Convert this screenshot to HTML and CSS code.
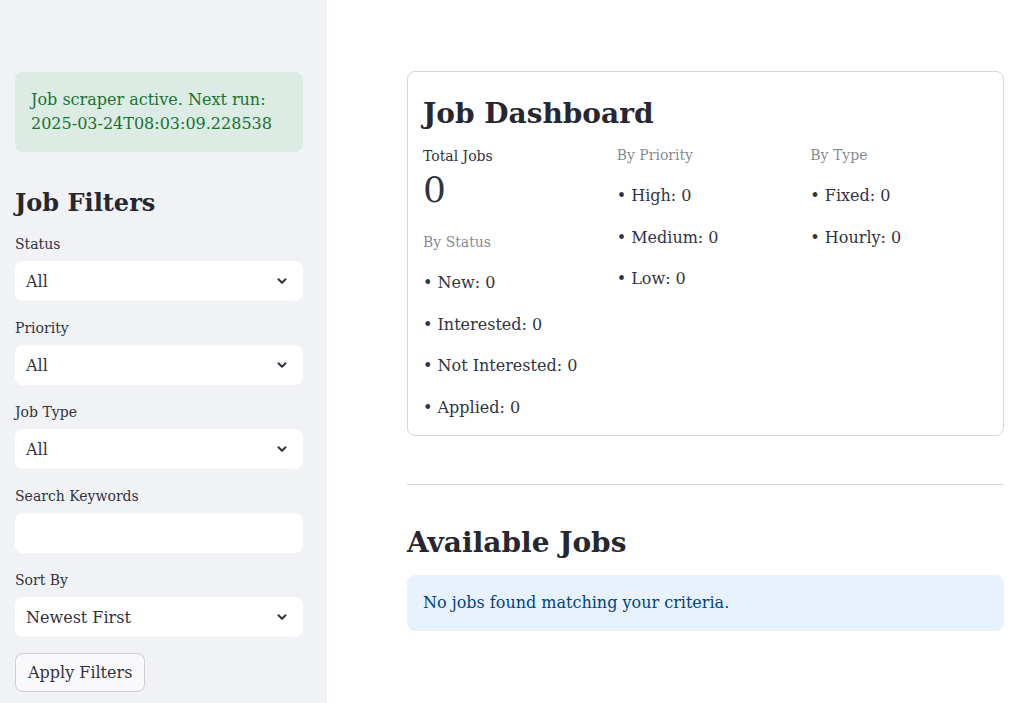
FILE: index.html
```html
<!DOCTYPE html>
<html lang="en">
<head>
<meta charset="utf-8">
<title>Job Dashboard</title>
<link rel="stylesheet" href="styles.css">
</head>
<body>
<div class="app">
  <aside class="sidebar">
    <div class="alert-success">Job scraper active. Next run: 2025-03-24T08:03:09.228538</div>
    <h2 class="side-title">Job Filters</h2>
    <div class="widget">
      <label class="wlabel">Status</label>
      <div class="select"><span>All</span><svg class="chev" viewBox="0 0 20 20" width="20" height="20"><path d="M6.5 8.2l3.5 3.5 3.5-3.5" fill="none" stroke="#31333f" stroke-width="2" stroke-linecap="round" stroke-linejoin="round"/></svg></div>
    </div>
    <div class="widget">
      <label class="wlabel">Priority</label>
      <div class="select"><span>All</span><svg class="chev" viewBox="0 0 20 20" width="20" height="20"><path d="M6.5 8.2l3.5 3.5 3.5-3.5" fill="none" stroke="#31333f" stroke-width="2" stroke-linecap="round" stroke-linejoin="round"/></svg></div>
    </div>
    <div class="widget">
      <label class="wlabel">Job Type</label>
      <div class="select"><span>All</span><svg class="chev" viewBox="0 0 20 20" width="20" height="20"><path d="M6.5 8.2l3.5 3.5 3.5-3.5" fill="none" stroke="#31333f" stroke-width="2" stroke-linecap="round" stroke-linejoin="round"/></svg></div>
    </div>
    <div class="widget">
      <label class="wlabel">Search Keywords</label>
      <div class="textinput"></div>
    </div>
    <div class="widget">
      <label class="wlabel">Sort By</label>
      <div class="select"><span>Newest First</span><svg class="chev" viewBox="0 0 20 20" width="20" height="20"><path d="M6.5 8.2l3.5 3.5 3.5-3.5" fill="none" stroke="#31333f" stroke-width="2" stroke-linecap="round" stroke-linejoin="round"/></svg></div>
    </div>
    <button class="btn">Apply Filters</button>
  </aside>
  <main class="main">
    <section class="card">
      <h3 class="title">Job Dashboard</h3>
      <div class="cols">
        <div class="col">
          <div class="metric-label">Total Jobs</div>
          <div class="metric-value">0</div>
          <div class="caption caption-status">By Status</div>
          <p class="item">• New: 0</p>
          <p class="item">• Interested: 0</p>
          <p class="item">• Not Interested: 0</p>
          <p class="item last">• Applied: 0</p>
        </div>
        <div class="col">
          <div class="caption">By Priority</div>
          <p class="item">• High: 0</p>
          <p class="item">• Medium: 0</p>
          <p class="item last">• Low: 0</p>
        </div>
        <div class="col">
          <div class="caption">By Type</div>
          <p class="item">• Fixed: 0</p>
          <p class="item last">• Hourly: 0</p>
        </div>
      </div>
    </section>
    <hr class="divider">
    <h3 class="title section-title">Available Jobs</h3>
    <div class="alert-info">No jobs found matching your criteria.</div>
  </main>
</div>
</body>
</html>
```

FILE: styles.css
```css
* { box-sizing: border-box; }
html, body {
  margin: 0;
  padding: 0;
  background: #ffffff;
  font-family: "DejaVu Serif", serif;
  color: rgb(49, 51, 63);
}
.app {
  display: flex;
  min-height: 703px;
}
.sidebar {
  width: 327px;
  flex: 0 0 327px;
  background: #f0f2f6;
  padding: 72px 24px 0 15px;
  display: flex;
  flex-direction: column;
}
.alert-success {
  background: #dcece5;
  color: rgb(23, 114, 51);
  border-radius: 8px;
  padding: 16px;
  font-size: 16px;
  line-height: 24px;
}
.side-title {
  font-size: 24px;
  font-weight: 700;
  line-height: 30px;
  color: rgb(38, 39, 48);
  margin: 36px 0 15px 0;
}
.widget {
  margin-bottom: 16px;
}
.wlabel {
  display: block;
  font-size: 14px;
  line-height: 22px;
  padding-bottom: 6px;
}
.select, .textinput {
  height: 40px;
  background: #ffffff;
  border-radius: 8px;
  display: flex;
  align-items: center;
  justify-content: space-between;
  padding: 0 11px 0 11px;
  font-size: 16px;
}
.chev { display: block; }
.btn {
  align-self: flex-start;
  font-family: "DejaVu Serif", serif;
  font-size: 16px;
  color: rgb(49, 51, 63);
  background: #f9f9fb;
  border: 1px solid rgba(49, 51, 63, 0.2);
  border-radius: 8px;
  height: 39px;
  padding: 0 12px;
  margin-top: 0;
}
.main {
  flex: 1;
  padding: 71px 22px 0 80px;
}
.card {
  border: 1px solid rgba(49, 51, 63, 0.2);
  border-radius: 8px;
  padding: 15px 15px 15px 15px;
}
.title {
  font-size: 28px;
  font-weight: 700;
  line-height: 34px;
  color: rgb(38, 39, 48);
  margin: 0;
}
.card .title {
  margin-top: 10px;
}
.cols {
  display: grid;
  grid-template-columns: 1fr 1fr 1fr;
  gap: 16px;
  margin-top: 14px;
}
.metric-label {
  font-size: 14px;
  line-height: 20px;
  margin-top: 1px;
}
.metric-value {
  font-size: 36px;
  line-height: 44px;
  margin-top: 2px;
}
.caption {
  font-size: 14px;
  line-height: 21px;
  color: rgba(49, 51, 63, 0.6);
  margin-bottom: 17px;
}
.caption-status {
  margin-top: 20px;
}
.item {
  font-size: 16px;
  line-height: 25.6px;
  margin: 0 0 16px 0;
}
.item.last { margin-bottom: 0; }
.divider {
  border: none;
  border-top: 1px solid rgba(49, 51, 63, 0.2);
  margin: 48px 0 41px 0;
  height: 0;
}
.section-title {
  margin-bottom: 15px;
}
.alert-info {
  background: #e8f2fc;
  color: rgb(0, 66, 128);
  border-radius: 8px;
  padding: 16px;
  font-size: 16px;
  line-height: 24px;
}
```
